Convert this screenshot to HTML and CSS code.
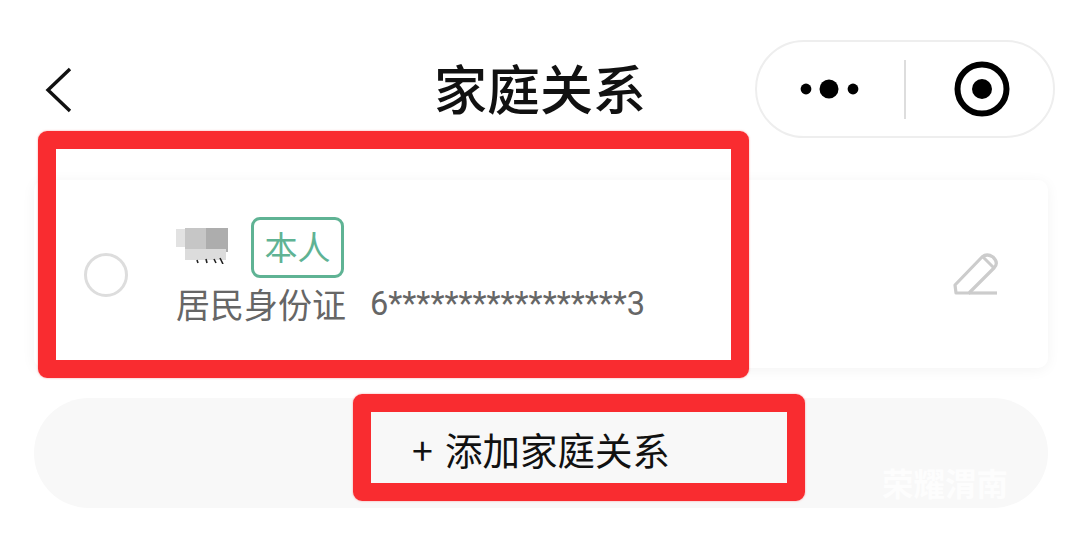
FILE: index.html
```html
<!DOCTYPE html>
<html lang="zh-CN">
<head>
    <meta charset="UTF-8">
    <meta name="viewport" content="width=device-width, initial-scale=1.0">
    <title>家庭关系</title>
    <link rel="stylesheet" href="styles.css">
</head>
<body>
    <header class="nav-bar">
        <svg class="back-icon" width="28" height="48" viewBox="0 0 28 48">
            <path d="M25 3 L3 24 L25 45" fill="none" stroke="#111" stroke-width="3.4"/>
        </svg>
        <h1 class="nav-title">家庭关系</h1>
        <div class="capsule">
            <svg class="capsule-more" width="60" height="24" viewBox="0 0 60 24">
                <circle cx="6" cy="12" r="5.4" fill="#000"/>
                <circle cx="29" cy="12" r="9.5" fill="#000"/>
                <circle cx="53" cy="12" r="5.4" fill="#000"/>
            </svg>
            <span class="capsule-line"></span>
            <svg class="capsule-close" width="56" height="56" viewBox="0 0 56 56">
                <circle cx="28" cy="28" r="24.5" fill="none" stroke="#000" stroke-width="6"/>
                <circle cx="28" cy="28" r="10" fill="#000"/>
            </svg>
        </div>
    </header>

    <section class="member-card">
        <span class="radio"></span>
        <div class="member-info">
            <div class="member-top">
                <svg class="name-mosaic" width="52" height="36" viewBox="0 0 52 36">
                    <rect x="0" y="1" width="10" height="18" fill="#e2e2e2"/>
                    <rect x="9" y="0" width="22" height="22" fill="#c6c6c6"/>
                    <rect x="30" y="0" width="22" height="24" fill="#adadad"/>
                    <rect x="9" y="21" width="41" height="11" fill="#dcdcdc"/>
                    <path d="M21 32l1 3M30 31l1 4M38 31l2 4M44 30l3 6" stroke="#222" stroke-width="1.6"/>
                </svg>
                <span class="member-tag">本人</span>
            </div>
            <div class="member-id">
                <span class="id-type">居民身份证</span>
                <span class="id-number">6*****************3</span>
            </div>
        </div>
        <svg class="edit-icon" width="46" height="44" viewBox="0 0 46 44">
            <path d="M3 41 L2 33 L29 5 Q34 1 40 5 Q46 11 41 16 L16 41 L3 41 Z" fill="none" stroke="#ccc" stroke-width="3.2" stroke-linejoin="round"/>
            <path d="M30 5 L41 16" fill="none" stroke="#ccc" stroke-width="3"/>
            <path d="M16 41 H44" fill="none" stroke="#ccc" stroke-width="3.2"/>
        </svg>
    </section>

    <button class="add-btn"><span class="add-plus">+</span>添加家庭关系</button>

    <!-- 标注红框 -->
    <div class="mark mark-card"></div>
    <div class="mark mark-btn"></div>

    <div class="watermark">荣耀渭南</div>
</body>
</html>
```

FILE: styles.css
```css
/* 家庭关系页面 */
:root {
    --mark-red: #f92c30;
    --tag-green: #5fb394;
    --text-gray: #666;
}

body {
    background: #fff;
    color: #111;
    font-family: "Noto Sans CJK SC", "Noto Sans", sans-serif;
    margin: 0;
    width: 1080px;
    height: 540px;
    overflow: hidden;
    position: relative;
}

/* 顶部导航 */
.nav-bar {
    height: 180px;
    box-sizing: border-box;
    padding: 40px 25px 0 45px;
    display: flex;
    align-items: flex-start;
    position: relative;
}

.back-icon {
    margin-top: 26px;
}

.nav-title {
    flex: 1;
    margin: 13px 0 0;
    padding-left: 361px;
    font-size: 53px;
    line-height: 68px;
    font-weight: 500;
    white-space: nowrap;
}

.capsule {
    width: 300px;
    height: 98px;
    box-sizing: border-box;
    border: 2px solid #eee;
    border-radius: 49px;
    display: flex;
    align-items: center;
    padding-left: 43px;
    flex-shrink: 0;
}

.capsule-line {
    width: 2px;
    height: 59px;
    background: #ddd;
    margin-left: 44px;
}

.capsule-close {
    margin-left: 48px;
}

/* 成员卡片 */
.member-card {
    margin: 0 32px 0 34px;
    height: 188px;
    box-sizing: border-box;
    border-radius: 10px;
    box-shadow: 0 2px 14px rgba(0, 0, 0, 0.05);
    display: flex;
    align-items: center;
    padding: 0 49px 0 50px;
}

.radio {
    width: 44px;
    height: 44px;
    box-sizing: border-box;
    border: 3.5px solid #ddd;
    border-radius: 50%;
    flex-shrink: 0;
    margin-top: 2px;
}

.member-info {
    flex: 1;
    margin-left: 48px;
}

.member-top {
    display: flex;
    align-items: center;
    gap: 23px;
    margin-top: -2px;
}

.name-mosaic {
    margin-bottom: 3px;
}

.member-tag {
    width: 93px;
    height: 61px;
    box-sizing: border-box;
    border: 3px solid var(--tag-green);
    border-radius: 9px;
    color: var(--tag-green);
    font-size: 33px;
    line-height: 53px;
    text-align: center;
}

.member-id {
    display: flex;
    gap: 24px;
    color: var(--text-gray);
    height: 52px;
    align-items: center;
    font-size: 34px;
}

.id-number {
    font-family: Roboto, "Liberation Sans", sans-serif;
    font-size: 32.6px;
}

.edit-icon {
    flex-shrink: 0;
    margin-top: 0;
}

/* 添加按钮 */
.add-btn {
    display: block;
    margin: 30px 32px 0 34px;
    width: 1014px;
    height: 110px;
    border: 0;
    border-radius: 55px;
    background: #f8f8f8;
    color: #111;
    font-family: inherit;
    font-size: 37.5px;
    line-height: 1;
    padding: 0 0 9px;
}

.add-plus {
    margin-right: 12px;
}

/* 标注红框 */
.mark {
    position: absolute;
    box-sizing: border-box;
    border: 18.5px solid var(--mark-red);
    border-radius: 9px;
    box-shadow: 0 0 2px rgba(249, 44, 48, 0.5);
    pointer-events: none;
}

.mark-card {
    left: 38px;
    top: 131px;
    width: 711px;
    height: 247px;
}

.mark-btn {
    left: 353px;
    top: 394px;
    width: 452px;
    height: 107px;
}

/* 水印 */
.watermark {
    position: absolute;
    left: 882px;
    top: 462px;
    color: rgba(255, 255, 255, 0.75);
    font-size: 31.5px;
    font-weight: 700;
    line-height: 40px;
}
```
